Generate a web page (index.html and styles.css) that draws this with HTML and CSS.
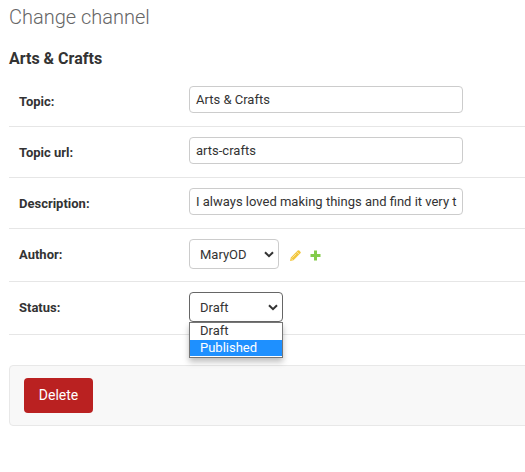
FILE: index.html
```html
<!DOCTYPE html>
<html lang="en">
<head>
<meta charset="utf-8">
<title>Change channel</title>
<link rel="stylesheet" href="styles.css">
</head>
<body>
<main class="content">
  <h1 class="title">Change channel</h1>
  <h2 class="subtitle">Arts &amp; Crafts</h2>
  <div class="form-row">
    <div class="label">Topic:</div>
    <div class="field">Arts &amp; Crafts</div>
  </div>
  <div class="form-row">
    <div class="label">Topic url:</div>
    <div class="field">arts-crafts</div>
  </div>
  <div class="form-row">
    <div class="label">Description:</div>
    <div class="field">I always loved making things and find it very t</div>
  </div>
  <div class="form-row">
    <div class="label raised">Author:</div>
    <div class="select author"><span>MaryOD</span>
      <svg class="chevron" viewBox="0 0 10 7"><path d="M1 1.2l4 4 4-4"/></svg>
    </div>
    <svg class="icon pencil" viewBox="0 0 13 13"><path fill="#efb80b" fill-opacity=".8" d="M1 12l.8-3.500L8.700 1.600Q9.500 .8 10.300 1.600l1.100 1.100q.8.8 0 1.600L4.500 11.200z"/><path fill="none" stroke="#fff" stroke-opacity=".75" stroke-width=".7" d="M7.600 2.700l2.700 2.700M3.300 8.700l4-4M2 9.300l1.700 1.700"/></svg>
    <svg class="icon plus" viewBox="0 0 13 13"><path fill="#83cb4b" d="M5 1.500h3V5h3.500v3H8v3.500H5V8H1.500V5H5z"/></svg>
  </div>
  <div class="form-row">
    <div class="label raised">Status:</div>
    <div class="select status"><span>Draft</span>
      <svg class="chevron" viewBox="0 0 10 7"><path d="M1 1.2l4 4 4-4"/></svg>
      <div class="options">
        <div class="option">Draft</div>
        <div class="option selected">Published</div>
      </div>
    </div>
  </div>
  <div class="submit-row"><button class="delete">Delete</button></div>
</main>
</body>
</html>
```
FILE: styles.css
```css
* { box-sizing: border-box; }
body {
  margin: 0;
  overflow: hidden;
  background: #fff;
  color: #333;
  font-family: Roboto, "Liberation Sans", sans-serif;
  font-size: 13px;
}
.content { padding: 5px 0 0 9px; }
.title {
  margin: 0;
  height: 42px;
  font-size: 20px;
  line-height: 24px;
  font-weight: 300;
  color: #666;
}
.subtitle {
  margin: 0;
  height: 29px;
  font-size: 16px;
  line-height: 24px;
  font-weight: 700;
}
.form-row {
  display: flex;
  align-items: center;
  padding: 10px 10px 12px;
  border-bottom: 1px solid #e6e6e6;
}
.label {
  width: 170px;
  font-weight: 700;
  line-height: 16px;
  padding-top: 3px;
}
.raised { padding-top: 1px; }
.field {
  width: 274px;
  height: 27px;
  margin-bottom: 1px;
  padding: 0 6px;
  border: 1px solid #ccc;
  border-radius: 4px;
  line-height: 25px;
  white-space: nowrap;
}
.select {
  position: relative;
  display: flex;
  align-items: center;
  justify-content: space-between;
  height: 30px;
  padding: 0 4px 0 10px;
  border: 1px solid #ccc;
  border-radius: 4px;
}
.author { width: 90px; }
.status { width: 94px; border-color: #666; }
.chevron {
  width: 10px;
  height: 7px;
  fill: none;
  stroke: #333;
  stroke-width: 2;
}
.icon { width: 13px; height: 13px; margin-top: 3px; }
.pencil { margin-left: 10px; }
.plus { margin-left: 7px; }
.options {
  position: absolute;
  z-index: 1;
  top: 29px;
  left: -1px;
  width: 94px;
  padding-bottom: 1px;
  border: 1px solid #767676;
  background: #fff;
  box-shadow: 0 4px 6px rgba(0, 0, 0, .25);
}
.option { height: 17px; padding-left: 10px; line-height: 15px; }
.selected { height: 16px; background: #1e90ff; color: #fff; }
.submit-row {
  width: 540px;
  height: 61px;
  margin-top: 30px;
  padding: 12px 14px;
  border: 1px solid #e8e8e8;
  border-radius: 4px;
  background: #f8f8f8;
}
.delete {
  width: 69px;
  height: 35px;
  padding: 0 0 2px;
  border: 0;
  border-radius: 4px;
  background: #ba2121;
  color: #fff;
  font: 14px Roboto, sans-serif;
}
```
